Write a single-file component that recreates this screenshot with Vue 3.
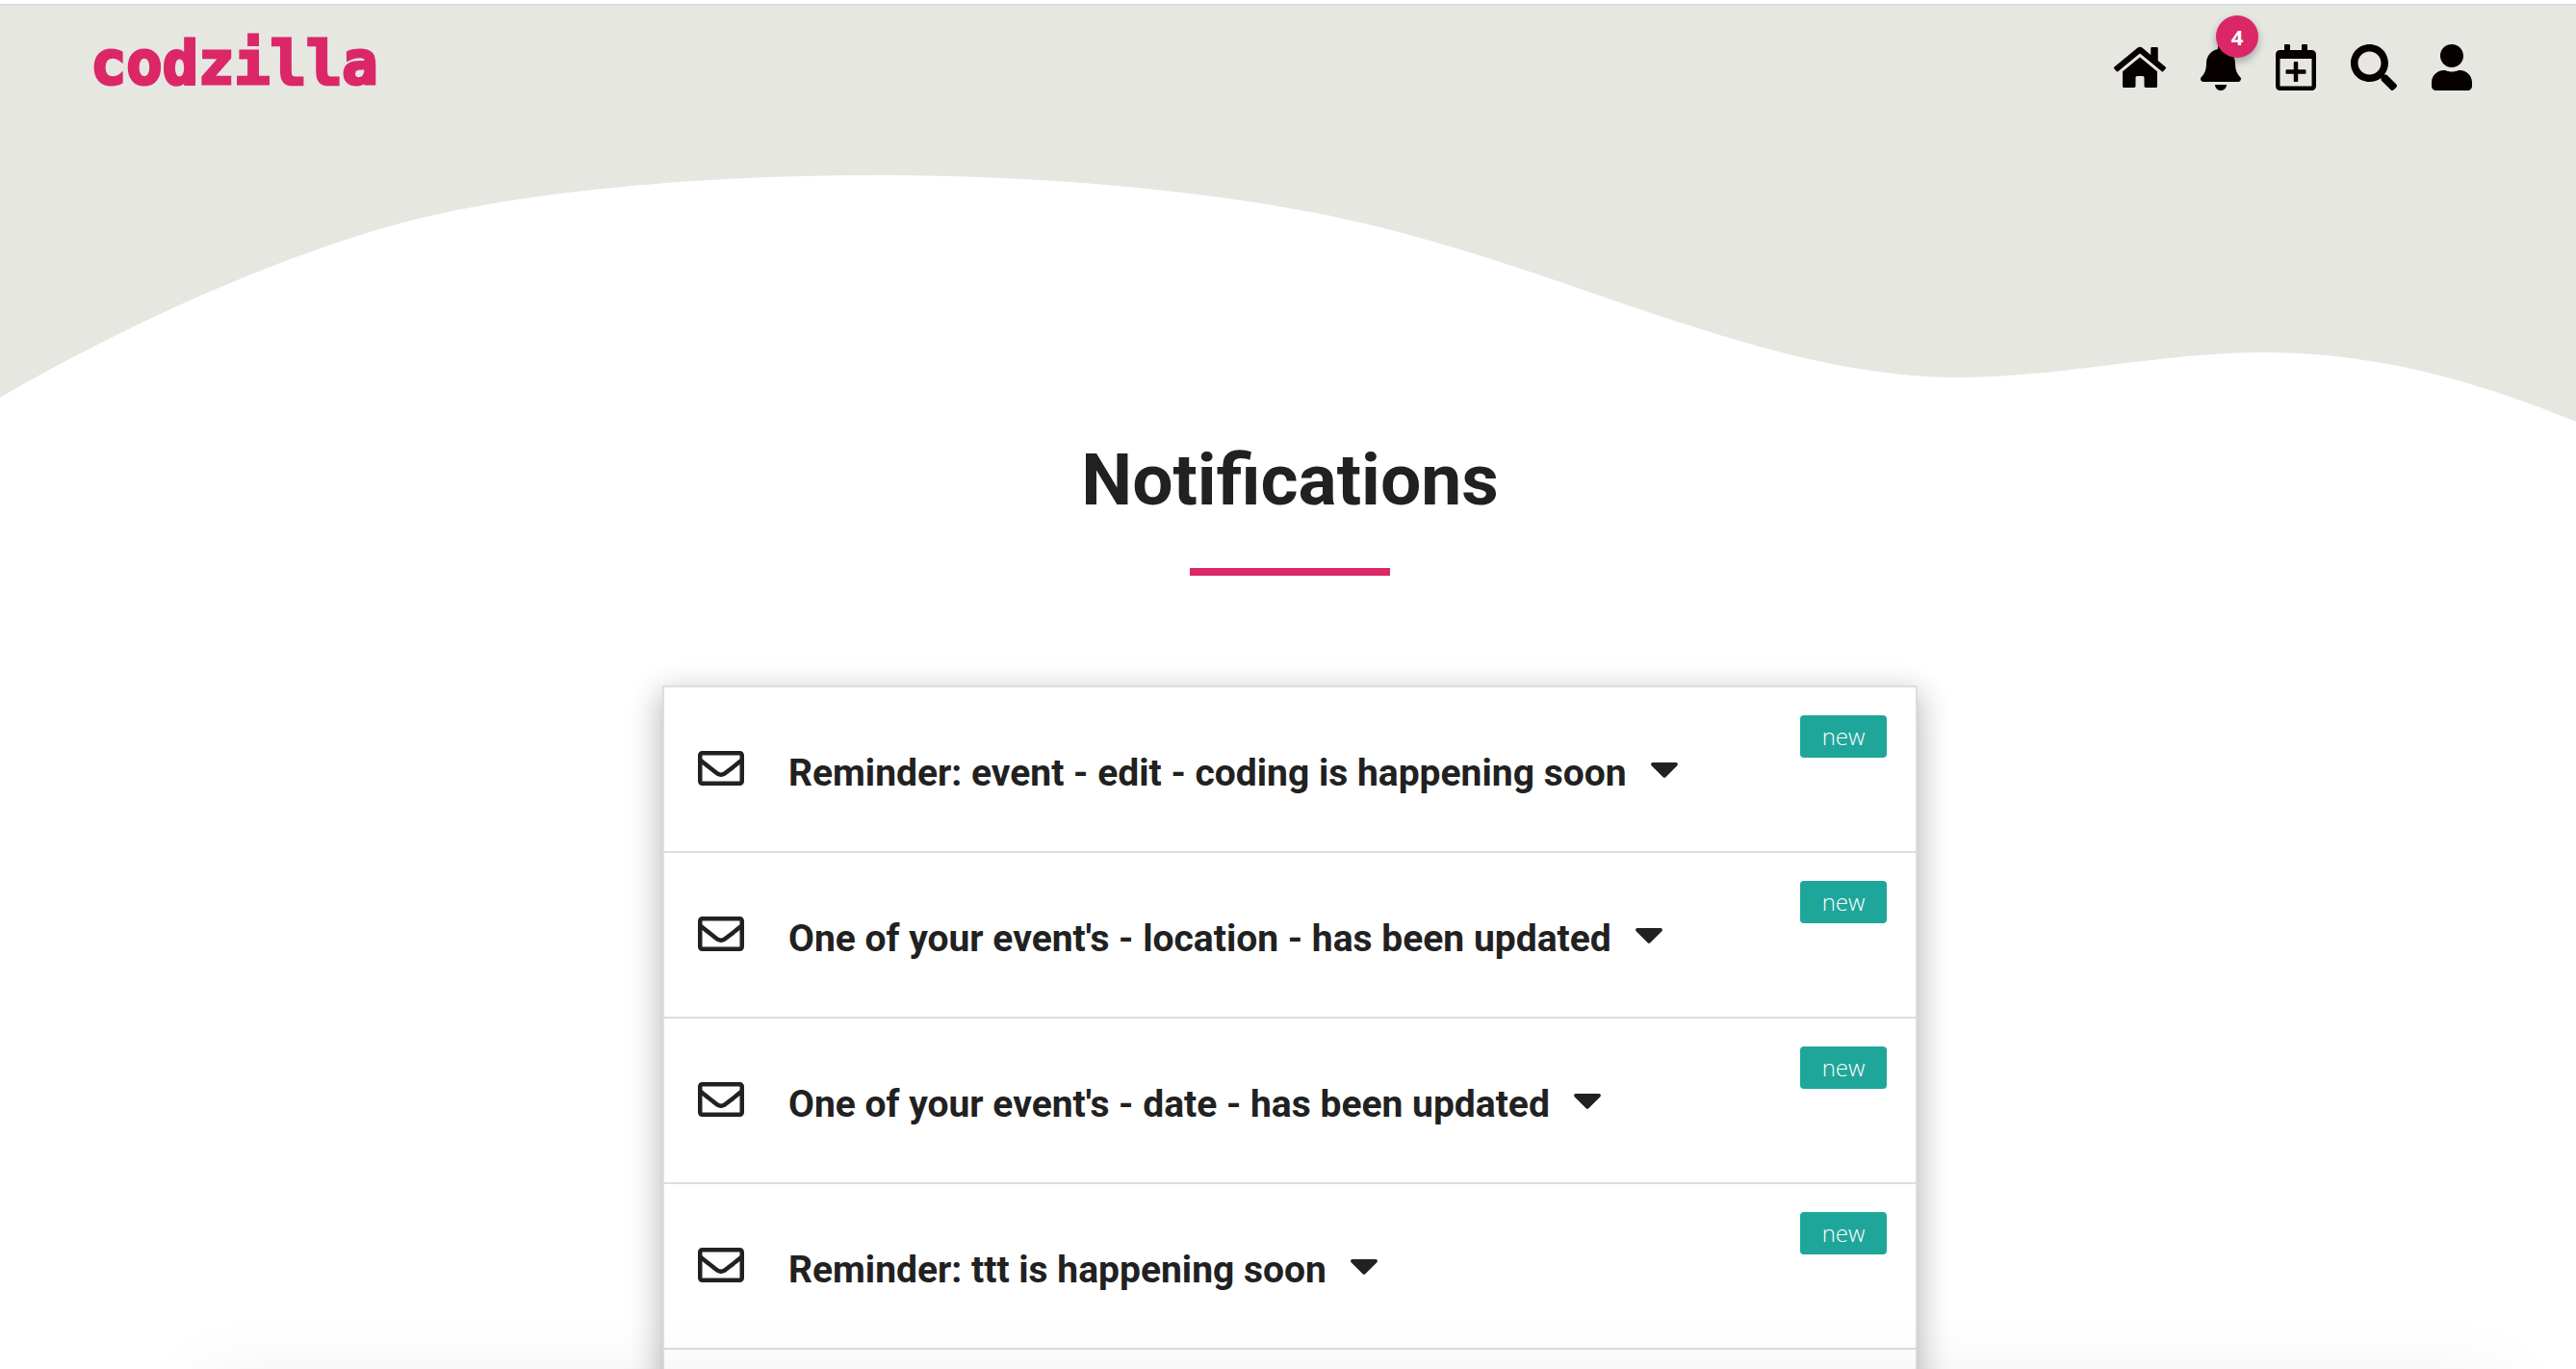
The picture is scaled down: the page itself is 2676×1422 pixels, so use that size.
<script setup>
import { ref } from 'vue'

const unread = ref(4)

const notifications = ref([
  { id: 1, title: 'Reminder: event - edit - coding is happening soon', open: false },
  { id: 2, title: "One of your event's - location - has been updated", open: false },
  { id: 3, title: "One of your event's - date - has been updated", open: false },
  { id: 4, title: 'Reminder: ttt is happening soon', open: false },
])
</script>

<template>
  <div class="page">
    <header class="hero">
      <svg class="wave" viewBox="0 0 2676 432" preserveAspectRatio="none" aria-hidden="true">
        <path d="M0 0H2676V432C2568 387 2461 360 2353 360C2247 360 2140 386 2034 386C1916 386 1797 347 1679 307C1565 267 1452 229 1338 210C1194 185 1049 176 905 176C725 176 540 194 427 223C310 253 150 320 0 407Z" />
      </svg>
      <nav class="nav">
        <a class="logo" href="#">codzilla</a>
        <div class="links">
          <a href="#" aria-label="Home">
            <svg class="icon wide" viewBox="0 0 576 512"><path d="M280.37 148.26L96 300.11V464a16 16 0 0 0 16 16l112.06-.29a16 16 0 0 0 15.92-16V368a16 16 0 0 1 16-16h64a16 16 0 0 1 16 16v95.64a16 16 0 0 0 16 16.05L464 480a16 16 0 0 0 16-16V300L295.67 148.26a12.19 12.19 0 0 0-15.3 0zM571.6 251.47L488 182.56V44.05a12 12 0 0 0-12-12h-56a12 12 0 0 0-12 12v72.61L318.47 43a48 48 0 0 0-61 0L4.34 251.47a12 12 0 0 0-1.6 16.9l25.5 31A12 12 0 0 0 45.15 301l235.22-193.74a12.19 12.19 0 0 1 15.3 0L530.9 301a12 12 0 0 0 16.9-1.6l25.5-31a12 12 0 0 0-1.7-16.93z" /></svg>
          </a>
          <a class="bell" href="#" aria-label="Notifications">
            <svg class="icon narrow" viewBox="0 0 448 512"><path d="M224 512c35.32 0 63.97-28.65 63.97-64H160.03c0 35.35 28.65 64 63.97 64zm215.39-149.71c-19.32-20.76-55.47-51.99-55.47-154.29 0-77.7-54.48-139.9-127.94-155.16V32c0-17.67-14.32-32-31.98-32s-31.98 14.33-31.98 32v20.84C118.56 68.1 64.08 130.3 64.08 208c0 102.3-36.15 133.53-55.47 154.29-6 6.45-8.66 14.16-8.61 21.71.11 16.4 12.98 32 32.1 32h383.8c19.12 0 32-15.6 32.1-32 .05-7.55-2.61-15.27-8.61-21.71z" /></svg>
            <span class="count">{{ unread }}</span>
          </a>
          <a href="#" aria-label="Add event">
            <svg class="icon narrow" viewBox="0 0 448 512"><path d="M336 292v24c0 6.6-5.4 12-12 12h-76v76c0 6.6-5.4 12-12 12h-24c-6.6 0-12-5.4-12-12v-76h-76c-6.6 0-12-5.4-12-12v-24c0-6.6 5.4-12 12-12h76v-76c0-6.6 5.4-12 12-12h24c6.6 0 12 5.4 12 12v76h76c6.6 0 12 5.4 12 12zm112-180v352c0 26.5-21.5 48-48 48H48c-26.5 0-48-21.5-48-48V112c0-26.5 21.5-48 48-48h48V12c0-6.6 5.4-12 12-12h40c6.6 0 12 5.4 12 12v52h128V12c0-6.6 5.4-12 12-12h40c6.6 0 12 5.4 12 12v52h48c26.5 0 48 21.5 48 48zm-48 346V160H48v298c0 3.3 2.7 6 6 6h340c3.3 0 6-2.7 6-6z" /></svg>
          </a>
          <a href="#" aria-label="Search">
            <svg class="icon" viewBox="0 0 512 512"><path d="M505 442.7L405.3 343c-4.5-4.5-10.6-7-17-7H372c27.6-35.3 44-79.7 44-128C416 93.1 322.9 0 208 0S0 93.1 0 208s93.1 208 208 208c48.3 0 92.7-16.4 128-44v16.3c0 6.4 2.5 12.5 7 17l99.7 99.7c9.4 9.4 24.6 9.4 33.9 0l28.3-28.3c9.4-9.4 9.4-24.6.1-34zM208 336c-70.7 0-128-57.2-128-128 0-70.7 57.2-128 128-128 70.7 0 128 57.2 128 128 0 70.7-57.2 128-128 128z" /></svg>
          </a>
          <a href="#" aria-label="Profile">
            <svg class="icon narrow" viewBox="0 0 448 512"><path d="M224 256c70.7 0 128-57.3 128-128S294.7 0 224 0 96 57.3 96 128s57.3 128 128 128zm89.6 32h-16.7c-22.2 10.2-46.9 16-72.9 16s-50.6-5.8-72.9-16h-16.7C60.2 288 0 348.2 0 422.4V464c0 26.5 21.5 48 48 48h352c26.5 0 48-21.5 48-48v-41.6c0-74.2-60.2-134.4-134.4-134.4z" /></svg>
          </a>
        </div>
      </nav>
    </header>

    <main class="main">
      <h1 class="title">Notifications</h1>
      <ul class="list">
        <li v-for="item in notifications" :key="item.id" class="row">
          <button class="toggle" type="button" :aria-expanded="item.open" @click="item.open = !item.open">
            <svg class="icon" viewBox="0 0 512 512" aria-hidden="true"><path d="M464 64H48C21.49 64 0 85.49 0 112v288c0 26.51 21.49 48 48 48h416c26.51 0 48-21.49 48-48V112c0-26.51-21.49-48-48-48zm0 48v40.805c-22.422 18.259-58.168 46.651-134.587 106.49-16.841 13.247-50.201 45.072-73.413 44.701-23.208.375-56.579-31.459-73.413-44.701C106.18 199.465 70.425 171.067 48 152.805V112h416zM48 400V214.398c22.914 18.251 55.409 43.862 104.938 82.646 21.857 17.205 60.134 55.186 103.062 54.955 42.717.231 80.509-37.199 103.053-54.947 49.528-38.783 82.032-64.401 104.947-82.653V400H48z" /></svg>
            <span class="subject">{{ item.title }}</span>
            <svg class="icon caret" viewBox="0 0 320 512" aria-hidden="true"><path d="M31.3 192h257.3c17.8 0 26.7 21.5 14.1 34.1L174.1 354.8c-7.8 7.8-20.5 7.8-28.3 0L17.2 226.1C4.6 213.5 13.5 192 31.3 192z" /></svg>
          </button>
          <span class="tag">new</span>
        </li>
      </ul>
    </main>

    <div class="sheet"></div>
  </div>
</template>

<style>
body {
  background: #fff;
}
</style>

<style scoped>
.page {
  box-sizing: border-box;
  height: 100vh;
  overflow: hidden;
  padding-top: 4px;
  background: #fff;
  color: #212121;
  font-family: Roboto, 'Open Sans', sans-serif;
}

.hero {
  position: relative;
  height: 432px;
  border-top: 2px solid #dadce0;
}

.wave {
  position: absolute;
  inset: 0;
  display: block;
  width: 100%;
  height: 100%;
  fill: #e6e7e1;
}

.nav {
  position: relative;
  display: flex;
  align-items: center;
  justify-content: space-between;
  height: 128px;
  padding: 0 108px 0 94px;
}

.logo {
  margin-bottom: 8px;
  color: #db2768;
  font: bold 62px/72px 'DejaVu Sans Mono', monospace;
  text-decoration: none;
  -webkit-text-stroke: 3px #db2768;
}

.links {
  display: flex;
  gap: 36px;
}

.links a {
  display: block;
  color: #070000;
}

.icon {
  display: block;
  flex: none;
  width: 48px;
  height: 48px;
  fill: currentColor;
}

.icon.wide {
  width: 54px;
}

.icon.narrow {
  width: 42px;
}

.icon.caret {
  width: 30px;
}

.bell {
  position: relative;
}

.count {
  position: absolute;
  top: -30px;
  right: -18px;
  width: 44px;
  height: 44px;
  border-radius: 50%;
  background: #db2768;
  box-shadow: 0 4px 8px rgba(0, 0, 0, 0.3);
  color: #fff;
  font: bold 22px/44px 'Open Sans', sans-serif;
  text-align: center;
}

.main {
  display: flex;
  flex-direction: column;
  align-items: center;
  padding-left: 4px;
}

.title {
  display: flex;
  flex-direction: column;
  align-items: center;
  gap: 46px;
  margin: 14px 0 114px;
  font-size: 75px;
  font-weight: 700;
  line-height: 92px;
}

.title::after {
  content: '';
  width: 208px;
  height: 8px;
  background: #db2768;
}

.list {
  box-sizing: border-box;
  width: 1304px;
  max-width: 90%;
  margin: 0;
  padding: 0 0 170px;
  border: 2px solid #ddd;
  background: #fff;
  box-shadow:
    0 16px 34px 4px rgba(0, 0, 0, 0.14),
    0 6px 28px 4px rgba(0, 0, 0, 0.12),
    0 10px 10px -6px rgba(0, 0, 0, 0.2);
  list-style: none;
}

.row {
  display: flex;
  align-items: flex-start;
  padding: 29px 30px 31px 35px;
  border-bottom: 2px solid #ddd;
}

.toggle {
  display: flex;
  flex: 1;
  align-items: center;
  min-height: 110px;
  padding: 0;
  border: 0;
  background: none;
  color: inherit;
  font: inherit;
  text-align: left;
  cursor: pointer;
}

.subject {
  margin: 0 24px 0 46px;
  padding-top: 10px;
  font-size: 39px;
  font-weight: 700;
  line-height: 48px;
}

.tag {
  min-width: 90px;
  border-radius: 4px;
  background: #1fa69a;
  color: #fff;
  font: 300 24px/44px 'Open Sans', sans-serif;
  text-align: center;
}

/* closed bottom sheet: only its shadow reaches into the window */
.sheet {
  position: fixed;
  top: 100%;
  right: 3%;
  left: 8%;
  height: 400px;
  box-shadow: 0 24px 80px rgba(0, 0, 0, 0.1);
}
</style>
